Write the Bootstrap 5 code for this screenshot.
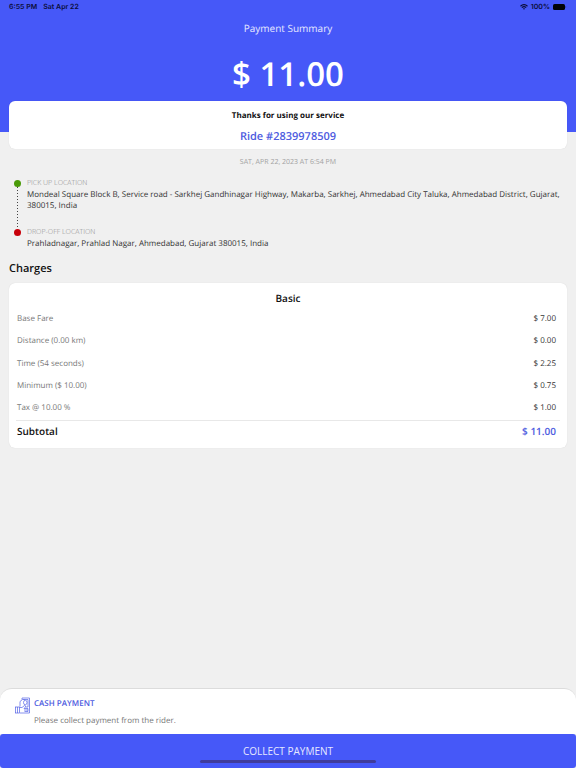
<!DOCTYPE html>
<html lang="en">
<head>
<meta charset="utf-8">
<meta name="viewport" content="width=device-width, initial-scale=1">
<title>Payment Summary</title>
<link href="https://cdn.jsdelivr.net/npm/bootstrap@5.3.0/dist/css/bootstrap.min.css" rel="stylesheet">
<style>
  :root { --brand: #4658f8; --brand-text: #4d5be0; --muted: #777; --faint: #a2a2a2; --ink: #333; }
  body { font-family: "Open Sans", "Noto Sans", sans-serif; font-size: 8px; line-height: 11px; color: var(--ink); background: #f0f0f0; text-rendering: geometricPrecision; }
  .hero { background: var(--brand); height: 132px; }
  .status-bar { font: 600 7px/14px Inter, "Liberation Sans", sans-serif; color: #0b0d3a; padding: 0 9px; }
  .clock { gap: 6px; }
  .signals { gap: 3px; }
  .page-title { font-size: 10px; line-height: 28px; color: #e6e9ff; font-weight: 400; }
  .total { font-size: 33px; line-height: 64px; font-weight: 600; }
  .content { padding: 0 9px; }
  .panel { background: #fff; border-radius: 6px; box-shadow: 0 0 1px rgba(0,0,0,.15); }
  .thanks { margin-top: -31px; height: 48px; padding-top: 4px; }
  .thanks h2 { font-size: 8px; line-height: 21px; font-weight: 700; color: #111; }
  .ride-link { font-size: 11px; line-height: 22px; font-weight: 600; color: var(--brand-text); }
  .faint { color: var(--faint); font-size: 7px; }
  .stamp { line-height: 28px; }
  .route { padding-top: 1px; margin-bottom: 10px; }
  .stop { padding-left: 5px; gap: 6px; }
  .stop .faint { font-weight: 300; color: #888; }
  .stop-first { min-height: 49px; }
  .rail { width: 7px; flex: none; padding-top: 2px; }
  .dot { width: 7px; height: 7px; border-radius: 50%; flex: none; }
  .dot-pickup { background: #4a9a08; }
  .dot-drop { background: #c8000a; }
  .dots { width: 1px; background: repeating-linear-gradient(#444 0 1px, transparent 1px 3px); }
  .heading { font-size: 11px; line-height: 20px; font-weight: 600; color: #111; }
  .bill { padding: 5px 7px 4px; }
  .bill h3 { font-size: 10px; line-height: 20px; font-weight: 600; color: #111; }
  .bill table { height: 136px; }
  .bill th, .bill td { padding: 0 0 1px; vertical-align: middle; }
  .bill th { font-weight: 400; color: var(--muted); padding-left: 1px; }
  .bill td { text-align: right; padding-right: 4px; font-weight: 500; }
  .bill tfoot tr { border-top: 1px solid #e8e8e8; height: 24px; }
  .bill tfoot th { font-size: 10px; font-weight: 600; color: #111; }
  .bill tfoot td { font-size: 10px; font-weight: 600; color: var(--brand-text); }
  .sheet { background: #fff; border-radius: 12px 12px 0 0; border-top: 1px solid #dcdcdc; padding: 8px 15px 7px; gap: 4px; }
  .sheet h2 { font-size: 8px; line-height: 13px; font-weight: 600; color: var(--brand-text); margin-bottom: 4px; }
  .sheet p { line-height: 13px; color: var(--muted); }
  .collect { background: var(--brand); color: #e6e9ff; font-size: 10px; line-height: 34px; padding: 0; border: 0; border-radius: 3px; }
  .collect:hover { background: #3648e0; color: #fff; }
  .home-bar { width: 176px; height: 3px; bottom: 5px; background: #403c9c; border-radius: 2px; }
</style>
</head>
<body class="d-flex flex-column min-vh-100">
<header class="hero text-center">
  <div class="status-bar d-flex justify-content-between">
    <div class="clock d-flex"><span>6:55 PM</span><span>Sat Apr 22</span></div>
    <div class="signals d-flex align-items-center">
      <svg width="8" height="6" viewBox="0 0 16 12" fill="none" stroke="currentColor" stroke-width="2.4" aria-hidden="true"><path d="M1 4.5Q8-2 15 4.5M3.7 7.3Q8 3.5 12.3 7.3"/><path d="M5.7 9.2Q8 7.4 10.3 9.2L8 11.6z" fill="currentColor" stroke="none"/></svg>
      <span>100%</span>
      <svg width="14" height="6" viewBox="0 0 14 6" fill="#020208" aria-hidden="true"><rect width="12" height="6" rx="1.6"/><path d="M12.7 2q1 1 0 2z"/></svg>
    </div>
  </div>
  <h1 class="page-title mb-0">Payment Summary</h1>
  <div class="total text-white">$ 11.00</div>
</header>

<main class="content flex-grow-1">
  <section class="panel thanks text-center">
    <h2 class="mb-0">Thanks for using our service</h2>
    <a class="ride-link d-block text-decoration-none" href="#ride">Ride #2839978509</a>
  </section>
  <div class="faint stamp text-center">SAT, APR 22, 2023 AT 6:54 PM</div>

  <section aria-label="Route" class="route">
    <div class="stop stop-first d-flex">
      <div class="rail d-flex flex-column align-items-center"><span class="dot dot-pickup"></span><span class="dots flex-grow-1"></span></div>
      <div><div class="faint">PICK UP LOCATION</div>Mondeal Square Block B, Service road - Sarkhej Gandhinagar Highway, Makarba, Sarkhej, Ahmedabad City Taluka, Ahmedabad District, Gujarat, 380015, India</div>
    </div>
    <div class="stop d-flex">
      <div class="rail d-flex flex-column align-items-center"><span class="dot dot-drop"></span></div>
      <div><div class="faint">DROP-OFF LOCATION</div>Prahladnagar, Prahlad Nagar, Ahmedabad, Gujarat 380015, India</div>
    </div>
  </section>

  <h2 class="heading mb-1">Charges</h2>
  <section class="panel bill">
    <h3 class="text-center mb-0">Basic</h3>
    <table class="w-100">
      <tbody>
        <tr><th scope="row">Base Fare</th><td>$ 7.00</td></tr>
        <tr><th scope="row">Distance (0.00 km)</th><td>$ 0.00</td></tr>
        <tr><th scope="row">Time (54 seconds)</th><td>$ 2.25</td></tr>
        <tr><th scope="row">Minimum ($ 10.00)</th><td>$ 0.75</td></tr>
        <tr><th scope="row">Tax @ 10.00 %</th><td>$ 1.00</td></tr>
      </tbody>
      <tfoot><tr><th scope="row">Subtotal</th><td>$ 11.00</td></tr></tfoot>
    </table>
  </section>
</main>

<footer class="position-relative">
  <div class="sheet d-flex">
    <svg width="15" height="17" viewBox="0 0 30 34" fill="none" stroke="#5361e6" stroke-width="1.4" aria-hidden="true">
      <path d="M14 5V2h15v30H10"/>
      <path d="M10 19V9l5-4h4M17 5h9v15h-4"/>
      <ellipse cx="20.500" cy="11" rx="3.500" ry="4.500"/>
      <rect x="1" y="20" width="8" height="12"/><path d="M5 20v12M9 21h5l5-4q3 0 2 3l-3 3h8v3h-8M26 26v3h-7"/>
    </svg>
    <div><h2>CASH PAYMENT</h2><p class="mb-0">Please collect payment from the rider.</p></div>
  </div>
  <button type="button" class="btn collect w-100 d-block">COLLECT PAYMENT</button>
  <div class="home-bar position-absolute start-50 translate-middle-x"></div>
</footer>
<script src="https://cdn.jsdelivr.net/npm/bootstrap@5.3.0/dist/js/bootstrap.bundle.min.js"></script>
</body>
</html>
